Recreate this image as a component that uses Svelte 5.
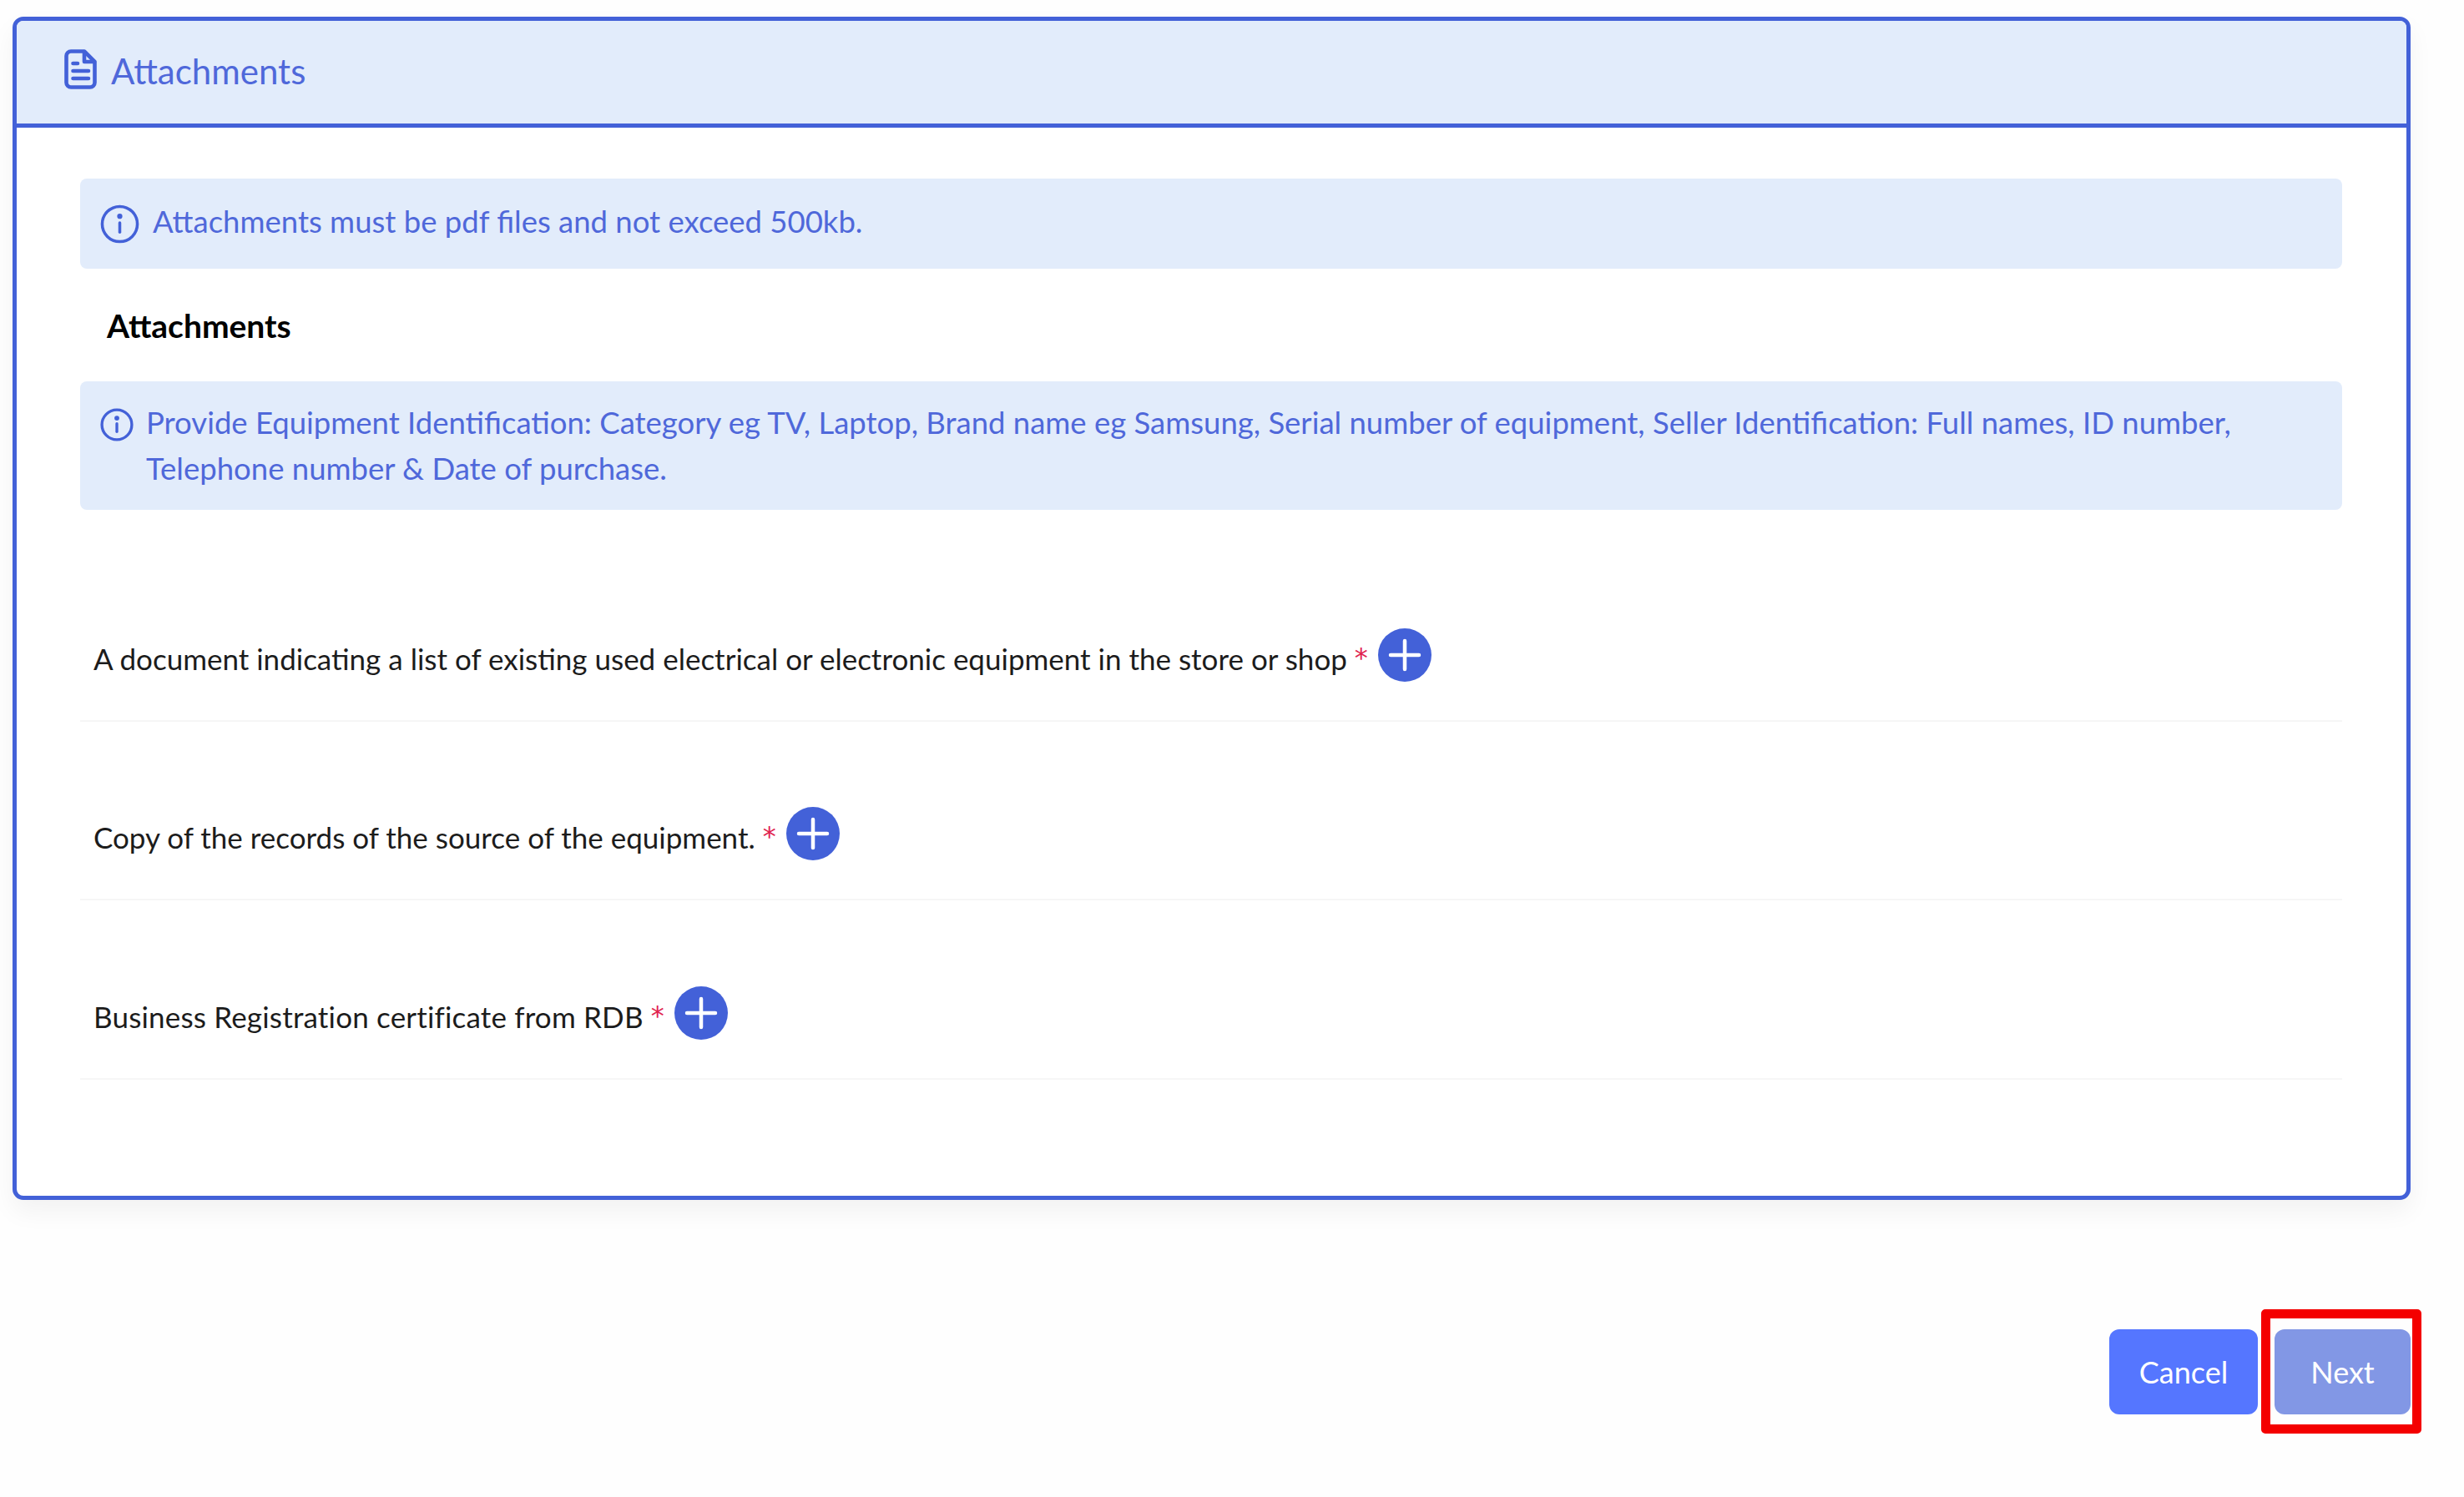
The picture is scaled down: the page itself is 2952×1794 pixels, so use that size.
<script>
  const rows = [
    { label: 'A document indicating a list of existing used electrical or electronic equipment in the store or shop', track: 0 },
    { label: 'Copy of the records of the source of the equipment.', track: 0 },
    { label: 'Business Registration certificate from RDB', track: 0.18 }
  ];
</script>

<div class="page">
  <section class="card">
    <header class="head">
      <svg class="doc" viewBox="0 0 39 48" fill="none" stroke="currentColor" stroke-width="4.6" stroke-linecap="round" stroke-linejoin="round">
        <path d="M8 2.5H24L36.5 15V40A5.5 5.5 0 0 1 31 45.5H8A5.5 5.5 0 0 1 2.5 40V8A5.5 5.5 0 0 1 8 2.5Z" />
        <path d="M24 3V15H36" />
        <path d="M10.5 17H16M10.5 26H29M10.5 35H29" />
      </svg>
      <span>Attachments</span>
    </header>
    <div class="body">
      <div class="alert one">
        <svg class="info big" viewBox="0 0 48 48" fill="none" stroke="currentColor" stroke-width="3.6" stroke-linecap="round">
          <circle cx="24" cy="24" r="21.5" />
          <path d="M24 22.5V34" />
          <circle cx="24" cy="14.5" r="1.4" fill="currentColor" />
        </svg>
        <p>Attachments must be pdf files and not exceed 500kb.</p>
      </div>
      <h3>Attachments</h3>
      <div class="alert two">
        <svg class="info small" viewBox="0 0 48 48" fill="none" stroke="currentColor" stroke-width="4" stroke-linecap="round">
          <circle cx="24" cy="24" r="21.5" />
          <path d="M24 22.5V34" />
          <circle cx="24" cy="14.5" r="1.5" fill="currentColor" />
        </svg>
        <p>Provide Equipment Identification: Category eg TV, Laptop, Brand name eg Samsung, Serial number of equipment, Seller Identification: Full names, ID number, Telephone number &amp; Date of purchase.</p>
      </div>
      <div class="rows">
        {#each rows as row}
          <div class="row">
            <span class="label" style="letter-spacing: {row.track}px">{row.label}</span>
            <span class="req">*</span>
            <button class="add" type="button" aria-label="Add">
              <svg viewBox="0 0 64 64" fill="none" stroke="#fff" stroke-width="4.5" stroke-linecap="round"><path d="M32 15V49M15 32H49" /></svg>
            </button>
          </div>
        {/each}
      </div>
    </div>
  </section>
  <footer class="actions">
    <button class="btn cancel" type="button">Cancel</button>
    <div class="next-wrap">
      <button class="btn next" type="button">Next</button>
      <span class="mark"></span>
    </div>
  </footer>
</div>

<style>
  :global(body) {
    margin: 0;
    background: #fefefe;
  }
  .page {
    box-sizing: border-box;
    width: 2952px;
    height: 1794px;
    padding: 20px 64px 0 15px;
    font-family: "Lato", "Noto Sans", sans-serif;
  }
  .card {
    box-sizing: border-box;
    height: 1418px;
    border: 5px solid #4361d8;
    border-radius: 13px;
    background: #fff;
    box-shadow: 0 14px 30px rgba(0, 0, 0, 0.05);
    overflow: hidden;
  }
  .head {
    box-sizing: border-box;
    height: 128px;
    display: flex;
    align-items: center;
    gap: 17px;
    padding: 0 0 3px 57px;
    background: #e2ecfb;
    border-bottom: 5px solid #4361d8;
    color: #4f68da;
    font-size: 42px;
  }
  .doc {
    width: 39px;
    height: 48px;
    margin-top: -5px;
    color: #4361d8;
  }
  .body {
    padding: 61px 77px 0 76px;
  }
  .alert {
    display: flex;
    background: #e2ecfb;
    border-radius: 8px;
    color: #4f68da;
    font-size: 36.5px;
  }
  .alert p {
    margin: 0;
  }
  .one {
    box-sizing: border-box;
    height: 108px;
    align-items: center;
    gap: 16px;
    padding: 0 0 6px 24px;
    line-height: 54px;
  }
  .two {
    box-sizing: border-box;
    height: 154px;
    gap: 15px;
    padding: 22px 100px 0 24px;
    line-height: 54.5px;
  }
  .info {
    flex: none;
    color: #4361d8;
  }
  .big {
    width: 47px;
    height: 47px;
    margin-top: 6px;
  }
  .small {
    width: 40px;
    height: 40px;
    margin-top: 10px;
  }
  h3 {
    box-sizing: border-box;
    height: 135px;
    margin: 0;
    padding: 0 0 0 32px;
    display: flex;
    align-items: center;
    font-size: 39px;
    font-weight: 700;
    color: #000;
  }
  .rows {
    padding-top: 39px;
  }
  .row {
    box-sizing: border-box;
    height: 214.5px;
    display: flex;
    align-items: flex-end;
    padding: 0 0 46px 16px;
    border-bottom: 2px solid #f6f6f6;
    font-size: 35px;
    color: #1c1c1c;
  }
  .label {
    line-height: 54px;
    margin-bottom: 1px;
  }
  .req {
    margin: 0 12px 2px 9px;
    font-family: "DejaVu Sans", sans-serif;
    font-size: 32px;
    line-height: 54px;
    color: #e0224e;
  }
  .add {
    width: 64px;
    height: 64px;
    padding: 0;
    border: 0;
    border-radius: 50%;
    background: #4361d8;
  }
  .add svg {
    display: block;
    width: 64px;
    height: 64px;
  }
  .actions {
    display: flex;
    justify-content: flex-end;
    gap: 20px;
    margin-top: 155px;
  }
  .btn {
    height: 102px;
    border: 0;
    border-radius: 12px;
    color: #fff;
    font-family: inherit;
    font-size: 36px;
    padding: 0;
  }
  .cancel {
    width: 178px;
    background: #5576ff;
  }
  .next {
    width: 163px;
    background: #8297e5;
  }
  .next-wrap {
    position: relative;
    display: flex;
  }
  .mark {
    position: absolute;
    left: -16px;
    top: -24px;
    right: -13px;
    bottom: -23px;
    border: 11px solid #f40000;
    border-radius: 5px;
    pointer-events: none;
  }
</style>
